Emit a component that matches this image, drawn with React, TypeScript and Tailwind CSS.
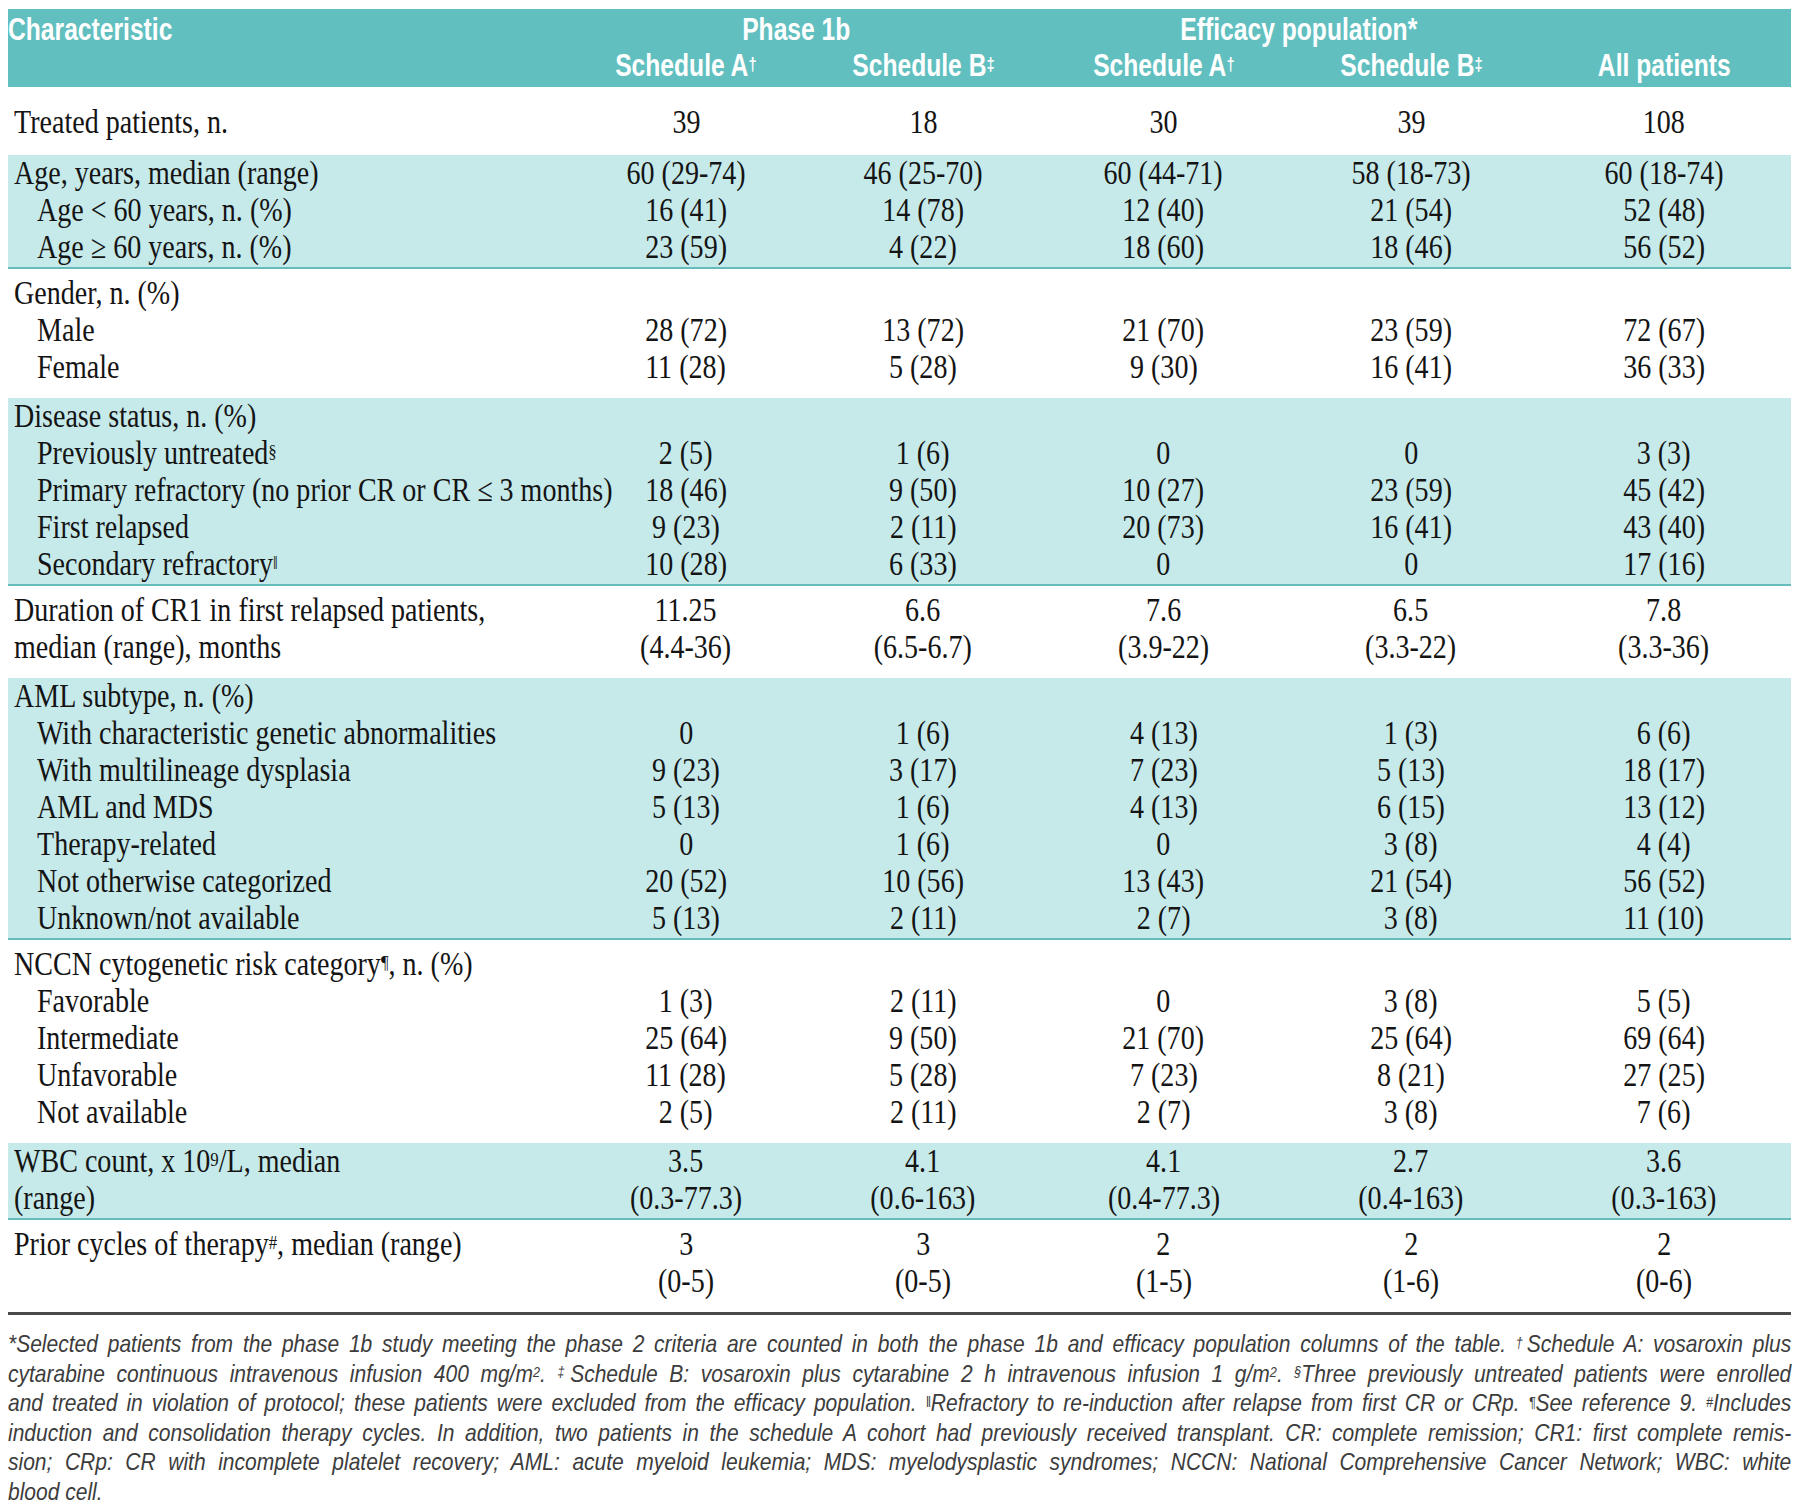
import React from "react";

type Row = { label: React.ReactNode; sub?: boolean; v: React.ReactNode[] };
type Block = { teal: boolean; rows: Row[]; cls?: string };

const S = ({ children }: { children: React.ReactNode }) => (
  <sup className="text-[0.6em] relative -top-[0.3em] align-baseline">{children}</sup>
);

const blocks: Block[] = [
  {
    teal: false,
    cls: "pt-[17px] pb-[14px]",
    rows: [{ label: "Treated patients, n.", v: ["39", "18", "30", "39", "108"] }],
  },
  {
    teal: true,
    rows: [
      { label: "Age, years, median (range)", v: ["60 (29-74)", "46 (25-70)", "60 (44-71)", "58 (18-73)", "60 (18-74)"] },
      { label: "Age < 60 years, n. (%)", sub: true, v: ["16 (41)", "14 (78)", "12 (40)", "21 (54)", "52 (48)"] },
      { label: "Age ≥ 60 years, n. (%)", sub: true, v: ["23 (59)", "4 (22)", "18 (60)", "18 (46)", "56 (52)"] },
    ],
  },
  {
    teal: false,
    rows: [
      { label: "Gender, n. (%)", v: ["", "", "", "", ""] },
      { label: "Male", sub: true, v: ["28 (72)", "13 (72)", "21 (70)", "23 (59)", "72 (67)"] },
      { label: "Female", sub: true, v: ["11 (28)", "5 (28)", "9 (30)", "16 (41)", "36 (33)"] },
    ],
  },
  {
    teal: true,
    rows: [
      { label: "Disease status, n. (%)", v: ["", "", "", "", ""] },
      { label: <>Previously untreated<S>§</S></>, sub: true, v: ["2 (5)", "1 (6)", "0", "0", "3 (3)"] },
      { label: "Primary refractory (no prior CR or CR ≤ 3 months)", sub: true, v: ["18 (46)", "9 (50)", "10 (27)", "23 (59)", "45 (42)"] },
      { label: "First relapsed", sub: true, v: ["9 (23)", "2 (11)", "20 (73)", "16 (41)", "43 (40)"] },
      { label: <>Secondary refractory<S>‖</S></>, sub: true, v: ["10 (28)", "6 (33)", "0", "0", "17 (16)"] },
    ],
  },
  {
    teal: false,
    rows: [
      { label: "Duration of CR1 in first relapsed patients,", v: ["11.25", "6.6", "7.6", "6.5", "7.8"] },
      { label: "median (range), months", v: ["(4.4-36)", "(6.5-6.7)", "(3.9-22)", "(3.3-22)", "(3.3-36)"] },
    ],
  },
  {
    teal: true,
    rows: [
      { label: "AML subtype, n. (%)", v: ["", "", "", "", ""] },
      { label: "With characteristic genetic abnormalities", sub: true, v: ["0", "1 (6)", "4 (13)", "1 (3)", "6 (6)"] },
      { label: "With multilineage dysplasia", sub: true, v: ["9 (23)", "3 (17)", "7 (23)", "5 (13)", "18 (17)"] },
      { label: "AML and MDS", sub: true, v: ["5 (13)", "1 (6)", "4 (13)", "6 (15)", "13 (12)"] },
      { label: "Therapy-related", sub: true, v: ["0", "1 (6)", "0", "3 (8)", "4 (4)"] },
      { label: "Not otherwise categorized", sub: true, v: ["20 (52)", "10 (56)", "13 (43)", "21 (54)", "56 (52)"] },
      { label: "Unknown/not available", sub: true, v: ["5 (13)", "2 (11)", "2 (7)", "3 (8)", "11 (10)"] },
    ],
  },
  {
    teal: false,
    rows: [
      { label: <>NCCN cytogenetic risk category<S>¶</S>, n. (%)</>, v: ["", "", "", "", ""] },
      { label: "Favorable", sub: true, v: ["1 (3)", "2 (11)", "0", "3 (8)", "5 (5)"] },
      { label: "Intermediate", sub: true, v: ["25 (64)", "9 (50)", "21 (70)", "25 (64)", "69 (64)"] },
      { label: "Unfavorable", sub: true, v: ["11 (28)", "5 (28)", "7 (23)", "8 (21)", "27 (25)"] },
      { label: "Not available", sub: true, v: ["2 (5)", "2 (11)", "2 (7)", "3 (8)", "7 (6)"] },
    ],
  },
  {
    teal: true,
    rows: [
      { label: <>WBC count, x 10<S>9</S>/L, median</>, v: ["3.5", "4.1", "4.1", "2.7", "3.6"] },
      { label: "(range)", v: ["(0.3-77.3)", "(0.6-163)", "(0.4-77.3)", "(0.4-163)", "(0.3-163)"] },
    ],
  },
  {
    teal: false,
    rows: [
      { label: <>Prior cycles of therapy<S>#</S>, median (range)</>, v: ["3", "3", "2", "2", "2"] },
      { label: "", v: ["(0-5)", "(0-5)", "(1-5)", "(1-6)", "(0-6)"] },
    ],
  },
];

const GRID = "grid grid-cols-[560px_236px_238px_243px_252px_254px]";

const foot: React.ReactNode[] = [
  <>*Selected patients from the phase 1b study meeting the phase 2 criteria are counted in both the phase 1b and efficacy population columns of the table. <S>†</S>Schedule A: vosaroxin plus</>,
  <>cytarabine continuous intravenous infusion 400 mg/m<S>2</S>. <S>‡</S>Schedule B: vosaroxin plus cytarabine 2 h intravenous infusion 1 g/m<S>2</S>. <S>§</S>Three previously untreated patients were enrolled</>,
  <>and treated in violation of protocol; these patients were excluded from the efficacy population. <S>‖</S>Refractory to re-induction after relapse from first CR or CRp. <S>¶</S>See reference 9. <S>#</S>Includes</>,
  <>induction and consolidation therapy cycles. In addition, two patients in the schedule A cohort had previously received transplant. CR: complete remission; CR1: first complete remis-</>,
  <>sion; CRp: CR with incomplete platelet recovery; AML: acute myeloid leukemia; MDS: myelodysplastic syndromes; NCCN: National Comprehensive Cancer Network; WBC: white</>,
];

const HC = ({ children }: { children: React.ReactNode }) => (
  <div className="text-center whitespace-nowrap">
    <span className="inline-block scale-x-[0.77]">{children}</span>
  </div>
);

export default function App() {
  return (
    <div className="w-[1800px] h-[1512px] bg-white pt-[9px] pl-[8px] text-[#141414] overflow-hidden">
      <div className="w-[1783px]">
        {/* header */}
        <div
          className="bg-[#61bfbf] text-white pt-[2px] pb-[4px] font-bold text-[32px] leading-[36px]"
          style={{ fontFamily: '"Liberation Sans", Arial, sans-serif' }}
        >
          <div className={GRID + " h-[36px] items-center"}>
            <div className="whitespace-nowrap">
              <span className="inline-block origin-left scale-x-[0.77]">Characteristic</span>
            </div>
            <div className="col-span-2 text-center pr-[18px] whitespace-nowrap">
              <span className="inline-block scale-x-[0.77]">Phase 1b</span>
            </div>
            <div className="col-span-2 text-center pl-[19px] whitespace-nowrap">
              <span className="inline-block scale-x-[0.77]">Efficacy population*</span>
            </div>
            <div />
          </div>
          <div className={GRID + " h-[36px] items-center"}>
            <div />
            <HC>Schedule A<S>†</S></HC>
            <HC>Schedule B<S>‡</S></HC>
            <HC>Schedule A<S>†</S></HC>
            <HC>Schedule B<S>‡</S></HC>
            <HC>All patients</HC>
          </div>
        </div>

        {/* body */}
        <div className="text-[33px] leading-[37px]" style={{ fontFamily: '"Liberation Serif", "Times New Roman", serif' }}>
          {blocks.map((b, bi) => (
            <div
              key={bi}
              className={
                b.cls
                  ? b.cls
                  : b.teal
                  ? "bg-[#c6eaea] pb-[1px] border-b-2 border-[#66bcbc]"
                  : "pt-[6px] pb-[12px]"
              }
            >
              {b.rows.map((r, ri) => (
                <div key={ri} className={GRID + " h-[37px] items-center"}>
                  <div className={(r.sub ? "pl-[29px]" : "pl-[6px]") + " whitespace-nowrap"}>
                    <span className="inline-block origin-left scale-x-[0.85]">{r.label}</span>
                  </div>
                  {r.v.map((v, vi) => (
                    <div key={vi} className="text-center whitespace-nowrap">
                      <span className="inline-block scale-x-[0.85]">{v}</span>
                    </div>
                  ))}
                </div>
              ))}
            </div>
          ))}
          <div className="h-[3px] bg-[#4a4a4a]" />
        </div>

        {/* footnote */}
        <div
          className="mt-[14px] italic text-[24px] leading-[29.5px] text-[#3c3c3c] w-[2038px] origin-left scale-x-[0.875]"
          style={{ fontFamily: '"Liberation Sans", Arial, sans-serif' }}
        >
          {foot.map((f, i) => (
            <div key={i} className="whitespace-nowrap text-justify [text-align-last:justify]">
              {f}
            </div>
          ))}
          <div className="whitespace-nowrap">blood cell.</div>
        </div>
      </div>
    </div>
  );
}
